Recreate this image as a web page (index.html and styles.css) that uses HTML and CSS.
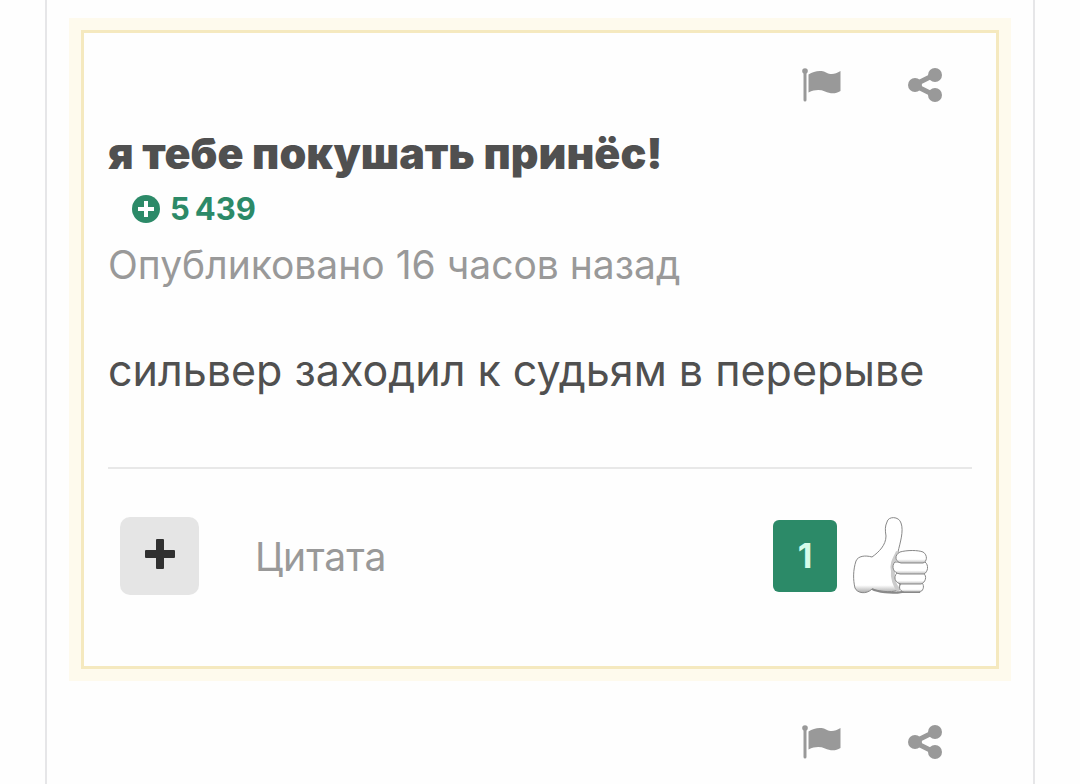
FILE: index.html
```html
<!DOCTYPE html>
<html lang="ru">
<head>
  <meta charset="UTF-8">
  <meta name="viewport" content="width=device-width, initial-scale=1.0">
  <title>Комментарии</title>
  <link rel="stylesheet" href="styles.css">
</head>
<body>
  <svg class="sprite" aria-hidden="true">
    <symbol id="icon-flag" viewBox="0 0 40 36">
      <circle cx="4" cy="4" r="2.800"/>
      <path d="M2.500 4h3v29a1.500 1.500 0 0 1-3 0z"/>
      <path d="M7.500 7.500C13 4 20 3 25 5.500S34 7.500 39.500 4V24C34 27.500 29 26.500 24 24.500S14 22.500 7.500 25.500z"/>
    </symbol>
    <symbol id="icon-share" viewBox="0 0 36 36">
      <path d="M7 18 27 8M7 18l20 10" stroke="currentColor" stroke-width="5"/>
      <circle cx="8" cy="18" r="7"/>
      <circle cx="28" cy="8" r="7"/>
      <circle cx="28" cy="28" r="7"/>
    </symbol>
  </svg>

  <main class="feed">
    <article class="post post-highlighted">
      <div class="post-tools">
        <button type="button" aria-label="Пожаловаться"><svg class="icon-flag"><use href="#icon-flag"/></svg></button>
        <button type="button" aria-label="Поделиться"><svg class="icon-share"><use href="#icon-share"/></svg></button>
      </div>
      <h2>я тебе покушать принёс!</h2>
      <div class="score">
        <svg viewBox="0 0 28 28" aria-hidden="true">
          <circle cx="14" cy="14" r="14" fill="#2c8a68"/>
          <path d="M14 6v16M6 14h16" stroke="#fff" stroke-width="4"/>
        </svg>
        <span>5&#8201;439</span>
      </div>
      <a class="date" href="#">Опубликовано 16 часов назад</a>
      <p class="text">сильвер заходил к судьям в перерыве</p>
      <footer class="post-footer">
        <button type="button" class="multiquote" aria-label="Мультицитата">
          <svg viewBox="0 0 32 32"><path d="M13 1h6a1 1 0 0 1 1 1v10h10a1 1 0 0 1 1 1v6a1 1 0 0 1-1 1H20v10a1 1 0 0 1-1 1h-6a1 1 0 0 1-1-1V20H2a1 1 0 0 1-1-1v-6a1 1 0 0 1 1-1h10V2a1 1 0 0 1 1-1z" fill="#303030"/></svg>
        </button>
        <a class="quote" href="#">Цитата</a>
        <div class="reactions">
          <span class="count">1</span>
          <button type="button" class="like" aria-label="Нравится">
            <svg viewBox="0 0 78 80">
              <defs>
                <linearGradient id="hand" x1="0" y1="0" x2="0" y2="1">
                  <stop offset="0.900" stop-color="#fff"/>
                  <stop offset="1" stop-color="#aaa"/>
                </linearGradient>
                <linearGradient id="finger" x1="0" y1="0" x2="0" y2="1">
                  <stop offset="0.700" stop-color="#fff"/>
                  <stop offset="1" stop-color="#bbb"/>
                </linearGradient>
              </defs>
              <path d="M35 6C36 0 47 0 49 7C52 15 48 27 46 36L48 73C43 77 30 76 20 73C14 79 5 77 3 72C1 64 1 54 4 45C6 40 13 39 20 41C27 36 34 29 34 20C33 14 33 10 35 6z" fill="url(#hand)" stroke="#888"/>
              <path d="M46 36C42 44 39 49 41 55C40 62 43 70 47 75" fill="none" stroke="#ccc" stroke-width="4"/>
              <path d="M20 73C25 76 40 78 50 76H68" fill="none" stroke="#888" stroke-width="2"/>
              <g fill="url(#finger)" stroke="#888">
                <path d="M50 67H70C73 70 71 76 67 76H52C47 75 46 70 50 67z"/>
                <path d="M45 57H71C76 60 73 67 69 68H49C43 67 41 61 45 57z"/>
                <path d="M43 46H73C77 49 76 56 72 58H48C41 57 39 50 43 46z"/>
                <path d="M48 36C55 34 66 34 71 36C76 39 75 46 71 47H49C43 46 42 39 48 36z"/>
              </g>
            </svg>
          </button>
        </div>
      </footer>
    </article>

    <article class="post">
      <div class="post-tools">
        <button type="button" aria-label="Пожаловаться"><svg class="icon-flag"><use href="#icon-flag"/></svg></button>
        <button type="button" aria-label="Поделиться"><svg class="icon-share"><use href="#icon-share"/></svg></button>
      </div>
    </article>
  </main>
</body>
</html>
```
FILE: styles.css
```css
* {
  box-sizing: border-box;
}
body {
  margin: 0;
  background: #fefefe;
  color: #505050;
  font-family: Inter, "Noto Sans", sans-serif;
}
a {
  color: #999;
  text-decoration: none;
}
button {
  padding: 0;
  border: none;
  background: none;
  color: inherit;
  cursor: pointer;
}
svg {
  display: block;
  fill: currentColor;
}
.sprite {
  display: none;
}
.feed {
  display: flex;
  flex-direction: column;
  gap: 18px;
  min-height: 100vh;
  margin: 0 45px;
  padding: 30px 34px 0;
  border: solid #e6e6e8;
  border-width: 0 2px;
}
.post {
  padding: 22px 24px 0;
  border: 3px solid transparent;
}
.post-highlighted {
  padding-bottom: 70px;
  border-color: #f5e9bf;
  box-shadow: 0 0 0 12px #fefaed;
}
.post-tools {
  display: flex;
  justify-content: flex-end;
  align-items: center;
  gap: 66px;
  height: 60px;
  padding-right: 29px;
  color: #999;
}
.icon-flag {
  width: 40px;
  height: 36px;
}
.icon-share {
  width: 36px;
  height: 36px;
}
.post h2 {
  margin: 10px 0 0;
  font-size: 43px;
  font-weight: 900;
  line-height: 56px;
}
.score {
  display: flex;
  align-items: center;
  gap: 10px;
  padding-left: 24px;
  color: #2c8a68;
  font-size: 31px;
  font-weight: 700;
  line-height: 56px;
}
.score svg {
  width: 28px;
  height: 28px;
}
.date {
  display: block;
  font-size: 39px;
  line-height: 56px;
}
.text {
  margin: 49px 0 69px;
  font-size: 43px;
  line-height: 56px;
}
.post-footer {
  display: flex;
  align-items: center;
  padding: 47px 42px 0 12px;
  border-top: 2px solid #e8e8e8;
}
.multiquote {
  display: grid;
  place-items: center;
  width: 79px;
  height: 78px;
  padding-bottom: 4px;
  border-radius: 10px;
  background: #e5e5e5;
}
.multiquote svg {
  width: 32px;
  height: 32px;
}
.quote {
  margin-left: 56px;
  font-size: 39px;
}
.reactions {
  display: flex;
  align-items: center;
  gap: 15px;
  margin-left: auto;
}
.count {
  width: 64px;
  border-radius: 6px;
  background: #2c8a68;
  color: #d5fbe9;
  font-size: 34px;
  font-weight: 700;
  line-height: 72px;
  text-align: center;
}
.like svg {
  width: 78px;
  height: 80px;
}
```
